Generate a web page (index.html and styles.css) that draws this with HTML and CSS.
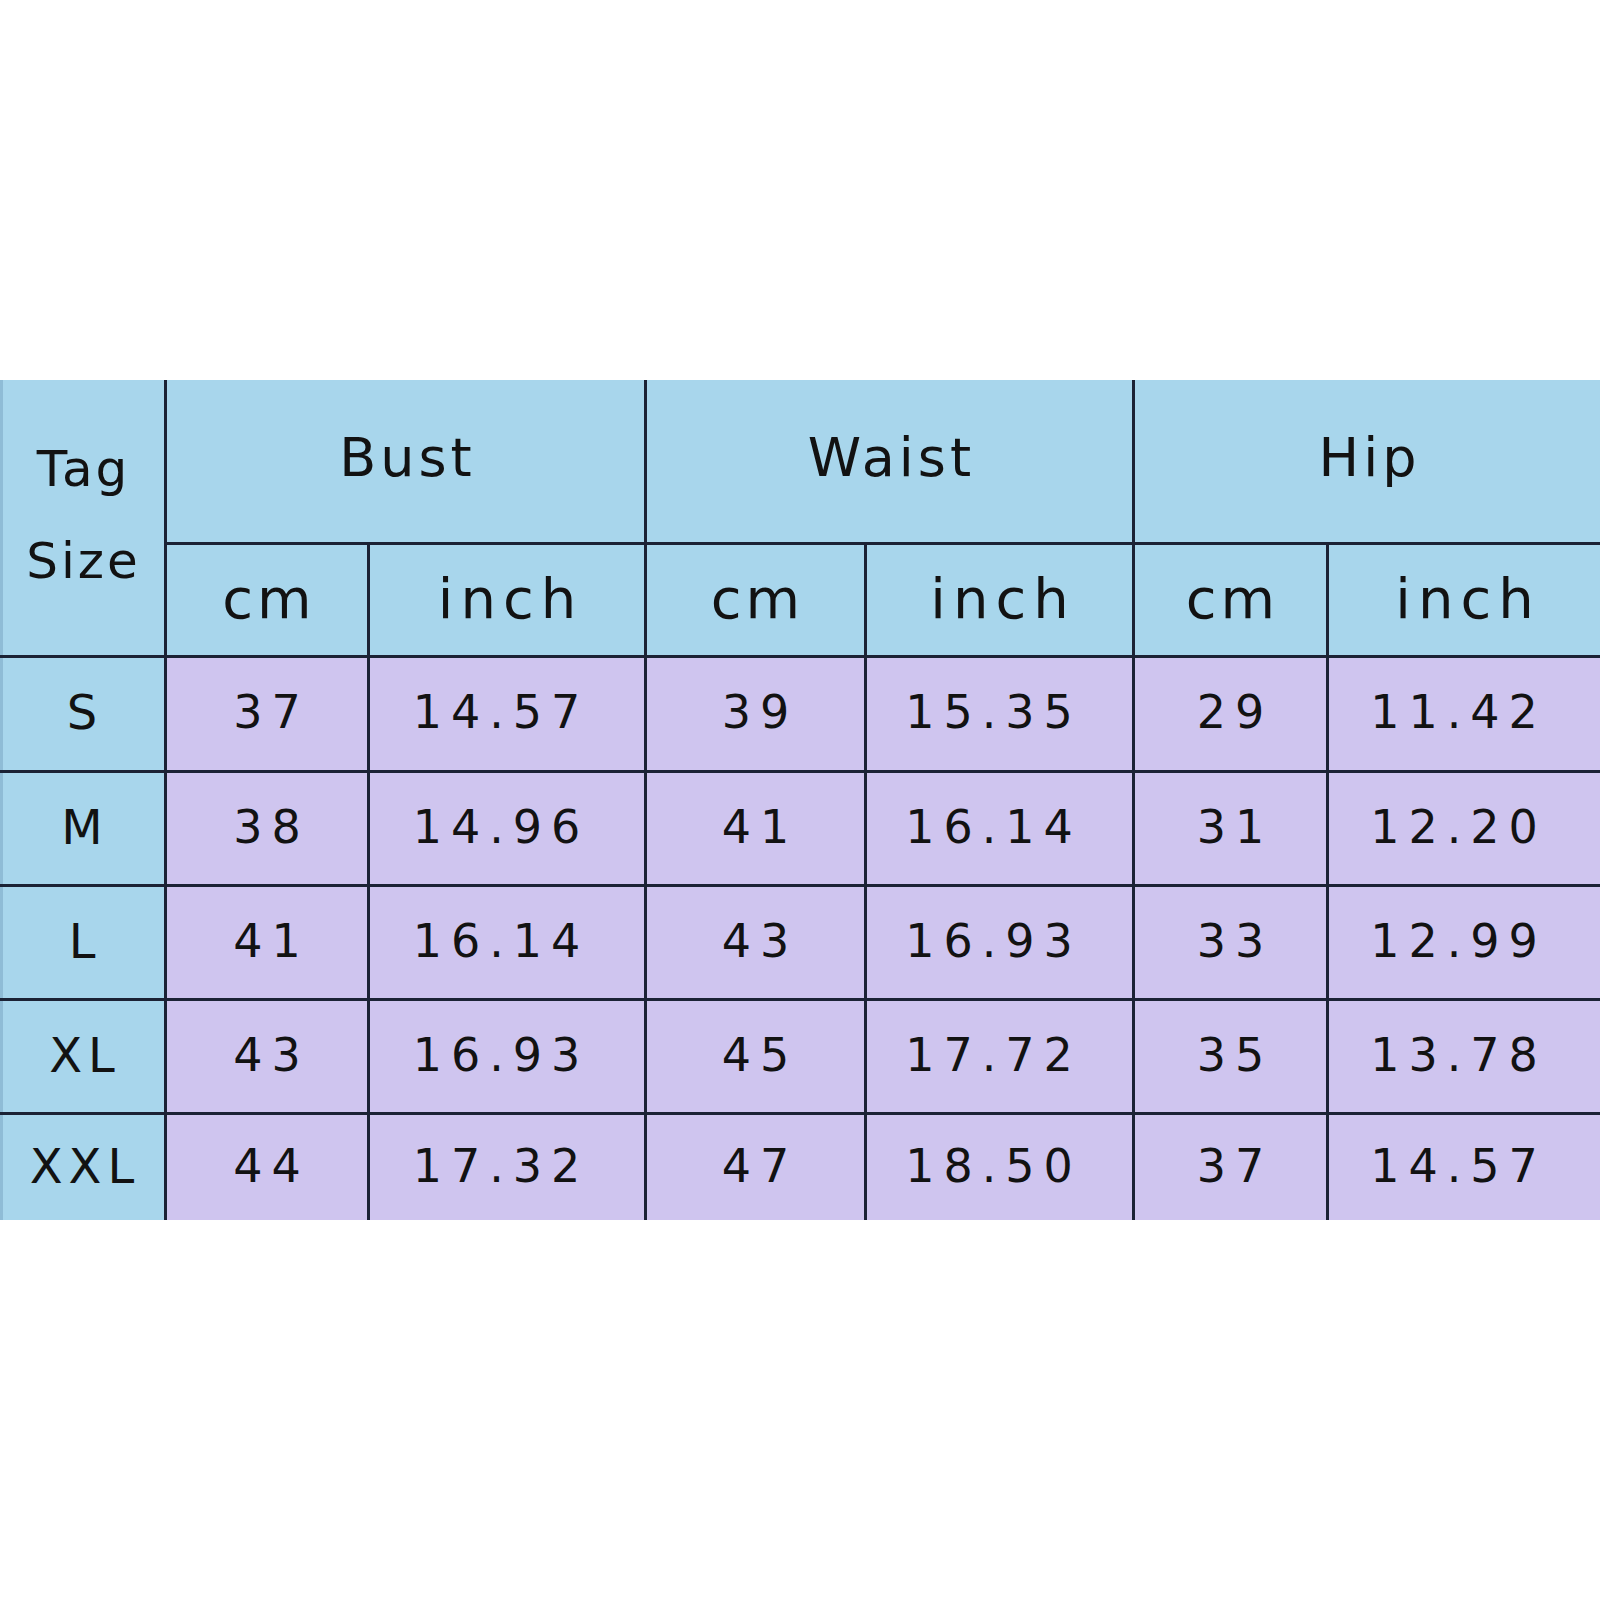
FILE: index.html
```html
<!DOCTYPE html>
<html>
<head>
<meta charset="utf-8">
<link rel="stylesheet" href="styles.css">
</head>
<body>
<div class="chart">
  <div class="cell tag hd">Tag<br>Size</div>
  <div class="cell hd group">Bust</div>
  <div class="cell hd group">Waist</div>
  <div class="cell hd group">Hip</div>
  <div class="cell hd unit">cm</div>
  <div class="cell hd unit inch">inch</div>
  <div class="cell hd unit">cm</div>
  <div class="cell hd unit inch">inch</div>
  <div class="cell hd unit">cm</div>
  <div class="cell hd unit inch">inch</div>

  <div class="cell size">S</div>
  <div class="cell val">37</div><div class="cell val dec">14.57</div>
  <div class="cell val">39</div><div class="cell val dec">15.35</div>
  <div class="cell val">29</div><div class="cell val dec">11.42</div>

  <div class="cell size">M</div>
  <div class="cell val">38</div><div class="cell val dec">14.96</div>
  <div class="cell val">41</div><div class="cell val dec">16.14</div>
  <div class="cell val">31</div><div class="cell val dec">12.20</div>

  <div class="cell size">L</div>
  <div class="cell val">41</div><div class="cell val dec">16.14</div>
  <div class="cell val">43</div><div class="cell val dec">16.93</div>
  <div class="cell val">33</div><div class="cell val dec">12.99</div>

  <div class="cell size">XL</div>
  <div class="cell val">43</div><div class="cell val dec">16.93</div>
  <div class="cell val">45</div><div class="cell val dec">17.72</div>
  <div class="cell val">35</div><div class="cell val dec">13.78</div>

  <div class="cell size">XXL</div>
  <div class="cell val">44</div><div class="cell val dec">17.32</div>
  <div class="cell val">47</div><div class="cell val dec">18.50</div>
  <div class="cell val">37</div><div class="cell val dec">14.57</div>
</div>
</body>
</html>
```
FILE: styles.css
```css
html, body {
  margin: 0;
  padding: 0;
  background: #ffffff;
}

.chart {
  margin-top: 380px;
  width: 1600px;
  display: grid;
  grid-template-columns: 164px 200px 274px 217px 265px 191px 271px;
  grid-template-rows: 162px 110px 112px 111px 111px 111px 105px;
  gap: 3px;
  background: #1b2235;
  font-family: "DejaVu Sans", sans-serif;
  color: #121212;
}

.cell {
  display: flex;
  align-items: center;
  justify-content: center;
  text-align: center;
  background: #cfc5ef;
  font-size: 46px;
}

.hd {
  background: #a8d6ec;
  font-size: 54px;
  letter-spacing: 4px;
  padding-left: 4px;
}

.tag {
  grid-row: 1 / span 2;
  line-height: 92px;
  font-size: 50px;
  letter-spacing: 3px;
  padding-left: 3px;
  padding-bottom: 6px;
  box-shadow: inset 3px 0 0 #8fbcd6;
}

.group {
  grid-column: span 2;
  padding-bottom: 8px;
}

.unit {
  font-size: 56px;
  letter-spacing: 4px;
  padding-left: 4px;
  padding-bottom: 4px;
}

.unit.inch {
  letter-spacing: 7px;
  padding-left: 7px;
}

.size {
  background: #a8d6ec;
  letter-spacing: 6px;
  padding-left: 6px;
  padding-bottom: 4px;
  font-size: 48px;
  box-shadow: inset 3px 0 0 #8fbcd6;
}

.val {
  font-size: 46px;
  letter-spacing: 9px;
  padding-left: 9px;
  padding-bottom: 4px;
}

.val.dec {
  padding-left: 0;
  padding-right: 12px;
}
```
